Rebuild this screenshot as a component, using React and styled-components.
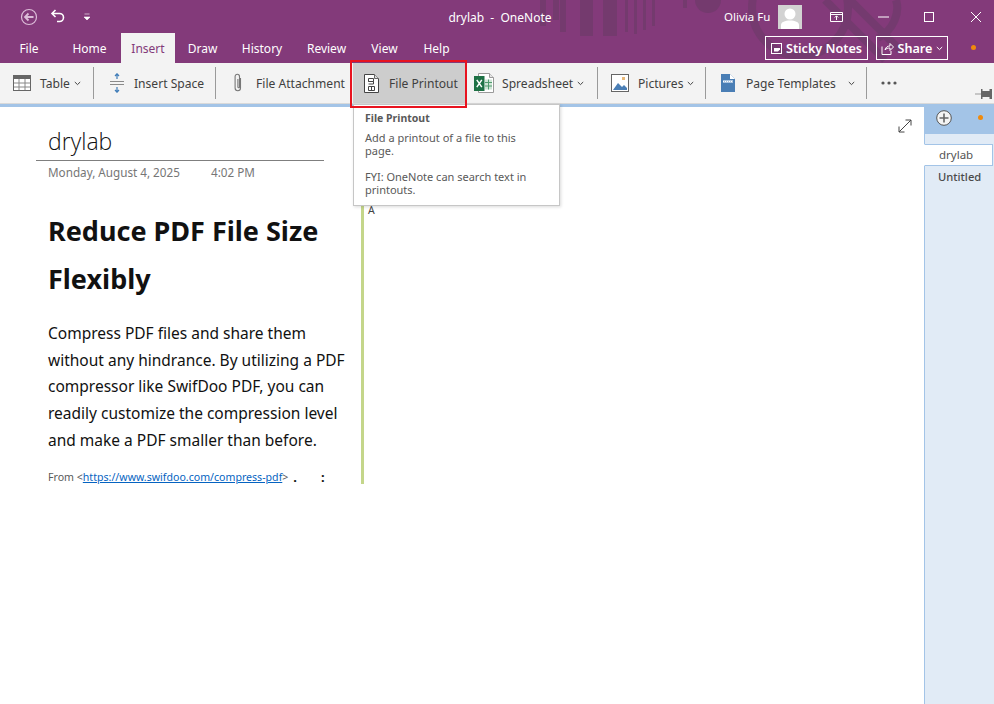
import React from 'react'
import styled, { createGlobalStyle } from 'styled-components'

const Global = createGlobalStyle`
html, body { margin: 0; padding: 0; background: #fff; }
body { font-family: 'Noto Sans', 'Open Sans', sans-serif; overflow: hidden; }
`

const Window = styled.div`
width: 994px;
height: 704px;
display: flex;
flex-direction: column;
overflow: hidden;
position: relative;
`

const Header = styled.div`
height: 63px;
background-color: #833a7a;
position: relative;
color: #fff;
flex-shrink: 0;
`
const Pattern = styled.svg`position: absolute; left: 0; top: 0; pointer-events: none;`

const TitleRow = styled.div`
height: 33px;
display: grid;
grid-template-columns: 410px 180px 1fr;
align-items: center;
position: relative;
`
const Qat = styled.div`display: flex; align-items: center; padding-left: 20px; gap: 12px;`
const WinTitle = styled.div`font-size: 12px; text-align: center; white-space: pre; padding-top: 1px;`
const WinRight = styled.div`display: flex; align-items: center; padding-left: 134px;`
const UserName = styled.span`font-size: 11.5px; width: 54px; white-space: nowrap;`
const Avatar = styled.div`width: 24px; height: 24px; background: #d2d2d2; overflow: hidden;`
const WinBtn = styled.span`display: flex; margin-left: ${p => p.$left}px;`

const TabRow = styled.div`
height: 30px;
display: flex;
position: relative;
`
const Tab = styled.div`
width: ${p => p.$w}px;
height: 30px;
display: flex;
align-items: center;
justify-content: center;
font-size: 12px;
padding-top: 1px;
box-sizing: border-box;
background: ${p => p.$active ? '#f3f3f3' : 'transparent'};
color: ${p => p.$active ? '#833a7a' : '#fff'};
`
const TabRight = styled.div`
margin-left: auto;
display: flex;
align-items: center;
height: 30px;
box-sizing: border-box;
gap: 8px;
padding-right: 46px;
position: relative;
`
const HeadBtn = styled.div`
height: 24px;
border: 1px solid #fff;
box-sizing: border-box;
width: ${p => p.$w}px;
display: flex;
align-items: center;
justify-content: center;
gap: 4px;
font-size: 12.6px;
font-weight: 600;
white-space: nowrap;
`
const Dot = styled.span`
position: absolute;
width: 5px;
height: 5px;
border-radius: 50%;
background: #f08a0c;
right: ${p => p.$right}px;
top: ${p => p.$top}px;
`

const Ribbon = styled.div`
height: 40px;
background: #f3f3f3;
display: flex;
align-items: center;
position: relative;
flex-shrink: 0;
`
const Tool = styled.div`
height: 40px;
width: ${p => p.$w}px;
box-sizing: border-box;
padding-left: ${p => p.$pad}px;
display: flex;
align-items: center;
color: #3f3f3f;
font-size: 12.1px;
white-space: nowrap;
background: ${p => p.$active ? '#cdcdcd' : 'transparent'};
`
const ToolLabel = styled.span`margin-left: ${p => p.$gap}px;`
const Caret = styled.svg`margin-left: ${p => p.$gap}px; flex-shrink: 0;`
const Sep = styled.div`width: 1px; height: 32px; background: #9a9a9a; flex-shrink: 0;`
const Pin = styled.svg`position: absolute; right: 2px; top: 26px;`
const Highlight = styled.div`
position: absolute;
left: 350px;
top: 60px;
width: 117px;
height: 48px;
box-sizing: border-box;
border: 2px solid #e8131f;
z-index: 4;
`

const BlueStrip = styled.div`
height: 4px;
background: #a3c4e7;
border-top: 1px solid #d9d9d9;
box-sizing: border-box;
flex-shrink: 0;
`

const Tooltip = styled.div`
position: absolute;
left: 353px;
top: 104px;
width: 207px;
height: 102px;
box-sizing: border-box;
padding: 7px 11px;
background: #fff;
border: 1px solid #c6c6c6;
box-shadow: 1px 1px 3px rgba(0,0,0,.15);
color: #595959;
font-size: 11px;
line-height: 13px;
z-index: 3;
`
const TipTitle = styled.div`font-weight: 700; margin-bottom: 6px; font-size: 10.5px; line-height: 13px;`
const TipText = styled.div`margin-bottom: 13px; width: 170px;`

const Body = styled.div`
flex: 1;
display: flex;
min-height: 0;
`
const Page = styled.div`
flex: 1;
display: flex;
align-items: flex-start;
position: relative;
`
const Expand = styled.svg`position: absolute; right: 12px; top: 12px;`
const NoteCol = styled.div`width: 361px; flex-shrink: 0; padding-left: 36px; box-sizing: border-box;`
const PageTitle = styled.div`
width: 288px;
height: 54px;
box-sizing: border-box;
padding: 16px 0 0 12px;
border-bottom: 1px solid #7f7f7f;
font-family: 'Open Sans', sans-serif;
font-weight: 300;
font-size: 23px;
line-height: 36px;
color: #111;
`
const DateRow = styled.div`
display: flex;
padding: 3px 0 0 12px;
font-size: 11.7px;
line-height: 16px;
color: #767676;
`
const DateText = styled.span`width: 163px;`
const Heading = styled.h1`
margin: 27px 0 0 12px;
font-size: 27px;
font-weight: 700;
line-height: 48px;
color: #111;
width: 300px;
`
const Para = styled.p`
margin: 17px 0 0 12px;
width: 305px;
font-size: 15.5px;
line-height: 26.7px;
color: #111;
`
const Source = styled.div`
margin: 15px 0 0 12px;
height: 16px;
display: flex;
align-items: center;
font-size: 10.6px;
line-height: 16px;
color: #595959;
white-space: pre;
position: relative;
`
const SourceLink = styled.a`color: #0563c1; text-decoration: underline;`
const Mark = styled.b`color: #111; font-size: 13px; margin-left: ${p => p.$left}px;`
const GreenCol = styled.div`
margin-top: 80px;
height: 297px;
width: 3px;
background: #c4d68a;
position: relative;
`
const OutlineA = styled.span`
position: absolute;
left: 7px;
top: 16px;
font-size: 10.5px;
color: #444;
`

const Side = styled.div`
width: 70px;
flex-shrink: 0;
background: #e1ebf6;
border-left: 1px solid #a3c4e7;
box-sizing: border-box;
display: flex;
flex-direction: column;
`
const SideTop = styled.div`
height: 27px;
background: #a3c4e7;
margin-left: -1px;
display: flex;
align-items: flex-start;
padding: 3px 0 0 12px;
box-sizing: border-box;
position: relative;
`
const SectionTab = styled.div`
margin: 10px 1px 0 -1px;
height: 22px;
box-sizing: border-box;
background: #fff;
border: 1px solid #a3c4e7;
border-left-color: #fff;
padding-left: 14px;
font-size: 11.5px;
line-height: 20px;
color: #555;
`
const PlainTab = styled.div`
padding-left: 13px;
height: 22px;
font-size: 11.2px;
font-weight: 500;
line-height: 22px;
color: #4a4a4a;
`

const Chevron = ({ gap }) => (
  <Caret $gap={gap} width="7" height="5" viewBox="0 0 7 5">
    <path d="M.8 1l2.700 2.600L6.200 1" fill="none" stroke="#444" strokeWidth="1" />
  </Caret>
)

const TableIcon = () => (
  <svg width="18" height="16" viewBox="0 0 18 16">
    <rect x=".5" y=".5" width="17" height="15" fill="#fff" stroke="#666" />
    <rect x="0" y="0" width="18" height="4" fill="#666" />
    <path d="M6 4v11M12 4v11M1 8h16M1 12h16" stroke="#888" fill="none" />
  </svg>
)
const SpaceIcon = () => (
  <svg width="14" height="20" viewBox="0 0 14 20">
    <path d="M0 8.500h14M0 11.500h14" stroke="#8a8a8a" fill="none" />
    <path d="M7 6V1M5 3l2-2.200L9 3M7 14v5M5 17l2 2.200 2-2.200" stroke="#3f7cb8" fill="none" strokeWidth="1.200" />
  </svg>
)
const ClipIcon = () => (
  <svg width="12" height="20" viewBox="0 0 12 20">
    <path d="M8.500 5v10a2.700 2.700 0 0 1-5.400 0V3.500a2.200 2.200 0 0 1 4.400 0V14a.8.8 0 0 1-1.600 0V6" fill="none" stroke="#777" strokeWidth="1.100" />
  </svg>
)
const PrintoutIcon = () => (
  <svg width="15" height="19" viewBox="0 0 15 19">
    <path d="M.5.500h10l4 4v14H.5z" fill="#fff" stroke="#444" />
    <path d="M10.500.5v4h4" fill="#ddd" stroke="#666" />
    <path d="M4.500 4.500h5v3h-5zM4.500 7.500h5v2.500h-5M4.500 12.500h6v4h-6zM7.500 12.500v4" fill="none" stroke="#444" />
  </svg>
)
const ExcelIcon = () => (
  <svg width="20" height="20" viewBox="0 0 20 20">
    <path d="M4.500.5h11l4 4v15h-15z" fill="#fff" stroke="#9a9a9a" />
    <path d="M15.500.5v4h4" fill="#e6e6e6" stroke="#9a9a9a" />
    <path d="M11 6.500h7v10h-7z" fill="#cfe5d6" />
    <path d="M11 9.500h7M11 13h7M14.500 6.500v10" stroke="#4f9a6d" fill="none" />
    <rect x="0" y="3" width="10.500" height="15" fill="#1e7145" />
    <path d="M2.800 6.800l5 7.400M7.800 6.800l-5 7.400" stroke="#fff" strokeWidth="1.500" fill="none" />
  </svg>
)
const PictureIcon = () => (
  <svg width="18" height="18" viewBox="0 0 18 18">
    <rect x=".5" y=".5" width="17" height="17" fill="#fff" stroke="#666" />
    <rect x="11" y="3" width="3" height="3" fill="#e8b878" />
    <path d="M2 16l5-7 4 4 2-2 3 3v2z" fill="#4a7eb5" />
  </svg>
)
const TemplateIcon = () => (
  <svg width="14" height="18" viewBox="0 0 14 18">
    <path d="M0 0h9l5 5v13H0z" fill="#4a7eb5" />
    <path d="M9 0l5 5H9z" fill="#fff" />
    <path d="M2 6h10v3H2z" fill="#a9c3df" />
    <path d="M2 7.500h10" stroke="#fff" strokeDasharray="1 1" fill="none" />
  </svg>
)
const DotsIcon = () => (
  <svg width="16" height="4" viewBox="0 0 16 4">
    <circle cx="2" cy="2" r="1.600" fill="#555" />
    <circle cx="8" cy="2" r="1.600" fill="#555" />
    <circle cx="14" cy="2" r="1.600" fill="#555" />
  </svg>
)

const App = () => {
  return (
    <Window>
      <Global />
      <Header>
        <Pattern width="994" height="63" viewBox="0 0 994 63">
          <g fill="#6f3a6b" opacity=".75">
            <path d="M540 0h6v26h-6zM553 0h6v20h-6zM560 0h6v32h-6zM580 0h13v36h-13zM603 0h14v36h-14zM625 0h3v32h-3zM634 0h3v34h-3zM643 0h3v30h-3zM652 0h3v26h-3zM683 0h4v8h-4z" />
            <circle cx="708" cy="0" r="13" />
          </g>
          <g fill="none" stroke="#6f3a6b" strokeWidth="8" opacity=".7">
            <circle cx="800" cy="8" r="48" />
            <path d="M825 0l60 60M850 0l50 50M896 0c4 12-2 30-18 38" />
          </g>
        </Pattern>
        <TitleRow>
          <Qat>
            <svg width="18" height="18" viewBox="0 0 18 18">
              <circle cx="9" cy="9" r="7.500" fill="none" stroke="#dcbcd8" strokeWidth="1.200" />
              <path d="M13.500 9h-8M8.500 5.500L5 9l3.500 3.500" fill="none" stroke="#dcbcd8" strokeWidth="1.800" />
            </svg>
            <svg width="16" height="15" viewBox="0 0 16 15">
              <path d="M5.500 1L2 4.500 5.500 8M2 4.500h7.500a4 4 0 0 1 0 8H7" fill="none" stroke="#fff" strokeWidth="1.600" />
            </svg>
            <svg width="8" height="8" viewBox="0 0 8 8" style={{ marginLeft: 5 }}>
              <path d="M1.500 1h5M1 4h6L4 7z" fill="#fff" stroke="#fff" strokeWidth=".6" />
            </svg>
          </Qat>
          <WinTitle>drylab  -  OneNote</WinTitle>
          <WinRight>
            <UserName>Olivia Fu</UserName>
            <Avatar>
              <svg width="24" height="24" viewBox="0 0 24 24">
                <circle cx="12" cy="9" r="5.500" fill="#fff" />
                <path d="M3 24v-4c0-3 4-4.500 9-4.500s9 1.500 9 4.500v4z" fill="#fff" />
              </svg>
            </Avatar>
            <WinBtn $left={28}>
              <svg width="13" height="10" viewBox="0 0 13 10">
                <path d="M.5.500h12v9H.5zM.5 2.500h12M6.500 8V4M4.800 5.500l1.700-1.700 1.700 1.700" fill="none" stroke="#fff" />
              </svg>
            </WinBtn>
            <WinBtn $left={35}>
              <svg width="11" height="2" viewBox="0 0 11 2"><path d="M0 1h11" stroke="#fff" /></svg>
            </WinBtn>
            <WinBtn $left={35}>
              <svg width="10" height="10" viewBox="0 0 10 10"><rect x=".5" y=".5" width="9" height="9" fill="none" stroke="#fff" /></svg>
            </WinBtn>
            <WinBtn $left={37}>
              <svg width="10" height="10" viewBox="0 0 10 10"><path d="M0 0l10 10M10 0L0 10" stroke="#fff" /></svg>
            </WinBtn>
          </WinRight>
        </TitleRow>
        <TabRow>
          <Tab $w={58}>File</Tab>
          <Tab $w={63}>Home</Tab>
          <Tab $w={54} $active>Insert</Tab>
          <Tab $w={55}>Draw</Tab>
          <Tab $w={64}>History</Tab>
          <Tab $w={65}>Review</Tab>
          <Tab $w={51}>View</Tab>
          <Tab $w={53}>Help</Tab>
          <TabRight>
            <HeadBtn $w={103}>
              <svg width="11" height="11" viewBox="0 0 11 11">
                <rect x=".5" y=".5" width="10" height="10" fill="none" stroke="#fff" />
                <path d="M3 8.500V5h6v1.500L7 8.500z" fill="#fff" />
              </svg>
              Sticky Notes
            </HeadBtn>
            <HeadBtn $w={72}>
              <svg width="13" height="13" viewBox="0 0 13 13">
                <path d="M1 4.500v8h9V9M4 8c.5-3 3-4 5-4V1.500L12.500 5 9 8.500V6C7 6 5 6.500 4 8z" fill="none" stroke="#fff" />
              </svg>
              Share
              <svg width="7" height="5" viewBox="0 0 7 5"><path d="M.8 1l2.700 2.600L6.200 1" fill="none" stroke="#fff" /></svg>
            </HeadBtn>
            <Dot $right={18} $top={12} />
          </TabRight>
        </TabRow>
      </Header>

      <Ribbon>
        <Tool $w={93} $pad={13}><TableIcon /><ToolLabel $gap={9}>Table</ToolLabel><Chevron gap={4} /></Tool>
        <Sep />
        <Tool $w={121} $pad={16}><SpaceIcon /><ToolLabel $gap={10}>Insert Space</ToolLabel></Tool>
        <Sep />
        <Tool $w={137} $pad={16}><ClipIcon /><ToolLabel $gap={12}>File Attachment</ToolLabel></Tool>
        <Tool $w={112} $pad={11} $active><PrintoutIcon /><ToolLabel $gap={10}>File Printout</ToolLabel></Tool>
        <Tool $w={132} $pad={9}><ExcelIcon /><ToolLabel $gap={8}>Spreadsheet</ToolLabel><Chevron gap={4} /></Tool>
        <Sep />
        <Tool $w={107} $pad={13}><PictureIcon /><ToolLabel $gap={9}>Pictures</ToolLabel><Chevron gap={4} /></Tool>
        <Sep />
        <Tool $w={160} $pad={15}><TemplateIcon /><ToolLabel $gap={11}>Page Templates</ToolLabel><Chevron gap={12} /></Tool>
        <Sep />
        <Tool $w={60} $pad={14}><DotsIcon /></Tool>
        <Pin width="17" height="10" viewBox="0 0 17 10">
          <path d="M0 5h6" stroke="#999" fill="none" />
          <path d="M6 0h1.500v2h7V0H17v10h-2.500V8h-7v2H6z" fill="#666" />
        </Pin>
      </Ribbon>
      <Highlight />
      <BlueStrip />
      <Tooltip>
        <TipTitle>File Printout</TipTitle>
        <TipText>Add a printout of a file to this page.</TipText>
        <TipText>FYI: OneNote can search text in printouts.</TipText>
      </Tooltip>

      <Body>
        <Page>
          <NoteCol>
            <PageTitle>drylab</PageTitle>
            <DateRow>
              <DateText>Monday, August 4, 2025</DateText>
              <span>4:02 PM</span>
            </DateRow>
            <Heading>Reduce PDF File Size Flexibly</Heading>
            <Para>
              Compress PDF files and share them without any hindrance. By utilizing a PDF compressor like SwifDoo PDF, you can readily customize the compression level and make a PDF smaller than before.
            </Para>
            <Source>
              From &lt;<SourceLink>https://www.swifdoo.com/compress-pdf</SourceLink>&gt;
              <Mark $left={5}>.</Mark>
              <Mark $left={24}>:</Mark>
            </Source>
          </NoteCol>
          <GreenCol><OutlineA>A</OutlineA></GreenCol>
          <Expand width="14" height="14" viewBox="0 0 14 14">
            <path d="M1 13L13 1M7.500 1H13v5.500M1 7.500V13h5.500" fill="none" stroke="#444" />
          </Expand>
        </Page>
        <Side>
          <SideTop>
            <svg width="16" height="16" viewBox="0 0 16 16">
              <circle cx="8" cy="8" r="7.300" fill="#f4f4f4" stroke="#555" />
              <path d="M8 3.500v9M3.500 8h9" stroke="#666" strokeWidth="1.600" />
            </svg>
            <Dot $right={11} $top={8} />
          </SideTop>
          <SectionTab>drylab</SectionTab>
          <PlainTab>Untitled</PlainTab>
        </Side>
      </Body>
    </Window>
  )
}

export default App
